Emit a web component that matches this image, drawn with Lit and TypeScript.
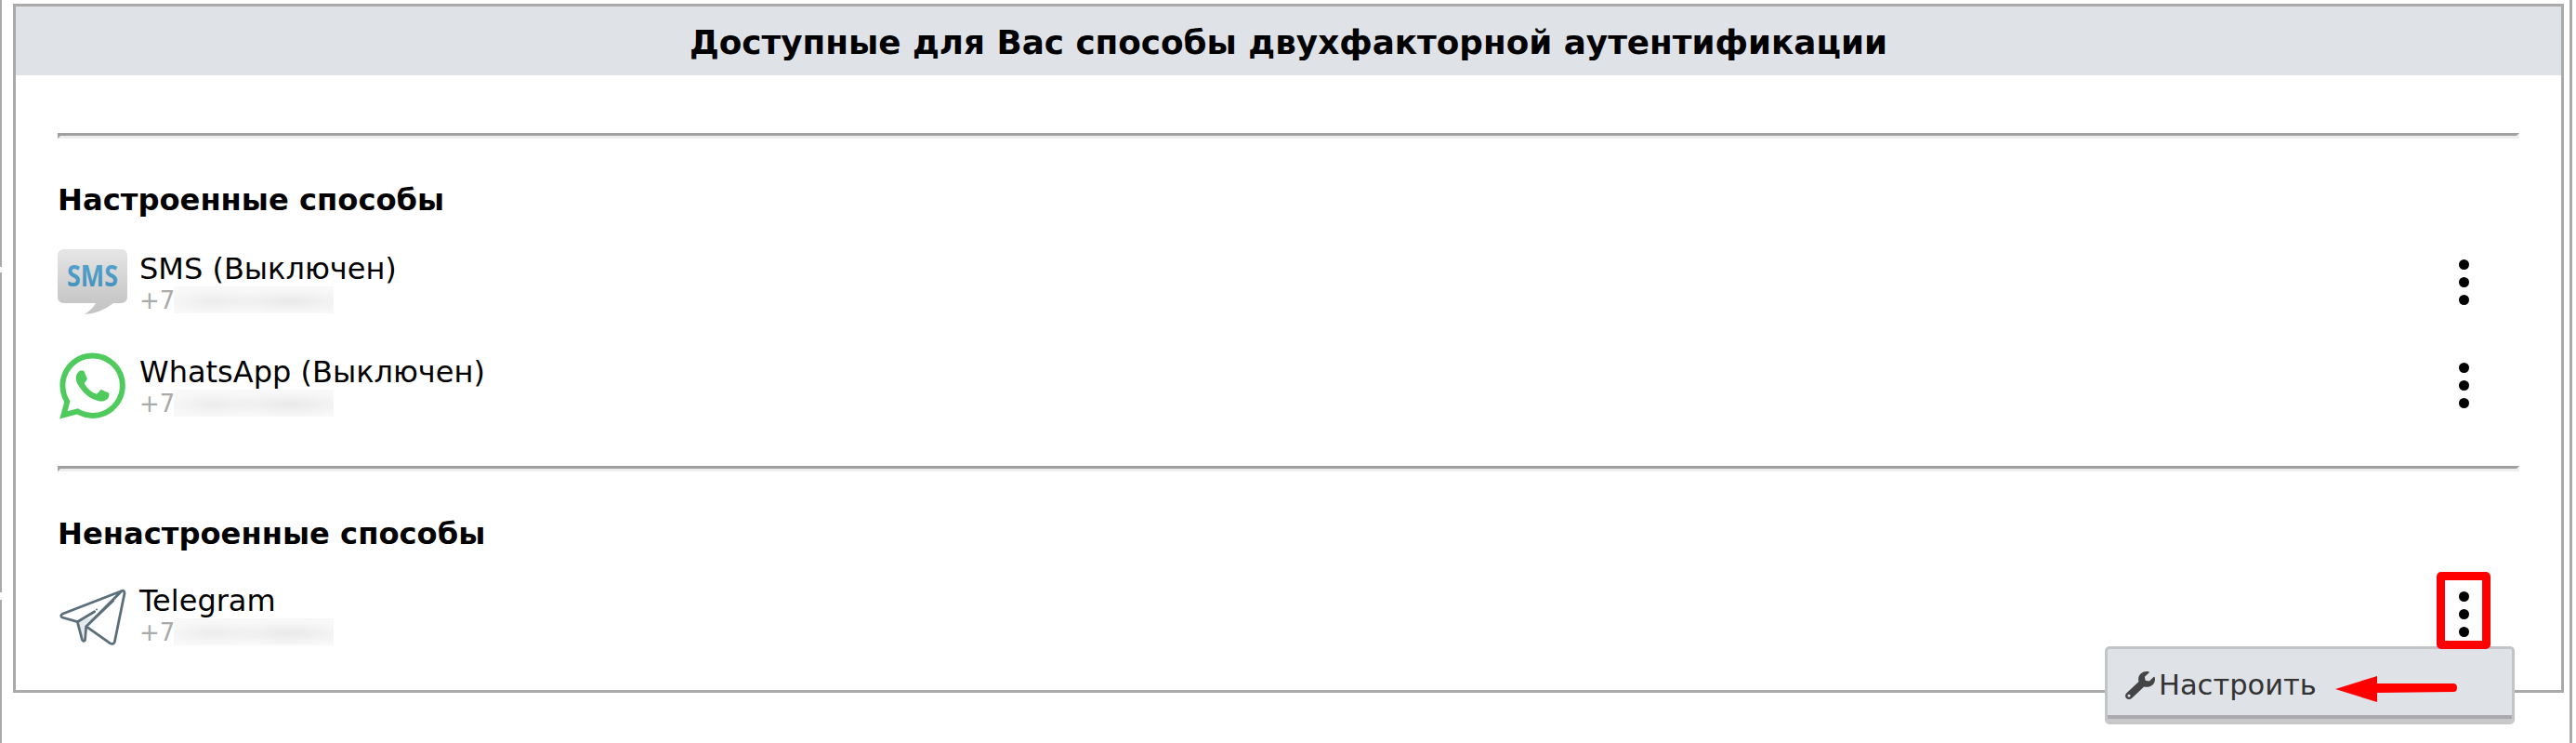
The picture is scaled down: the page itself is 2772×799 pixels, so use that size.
import { LitElement, html, css } from "lit";
import { customElement } from "lit/decorators.js";

const smsIcon = html`<svg class="icon" viewBox="62 268 75 72" width="75" height="72">
  <defs>
    <linearGradient id="g1" x1="0" y1="0" x2="0" y2="1"><stop offset="0" stop-color="#e6e6e6"/><stop offset="0.75" stop-color="#c9c9c9"/><stop offset="1" stop-color="#c4c4c4"/></linearGradient>
    <linearGradient id="g2" x1="0" y1="0" x2="0" y2="1"><stop offset="0" stop-color="#5aa7cf"/><stop offset="1" stop-color="#3f8fbb"/></linearGradient>
  </defs>
  <path fill="url(#g1)" d="M69 268H130Q137 268 137 275V319Q137 326 130 326H122Q108 337 91 338Q100 332 103 326H69Q62 326 62 319V275Q62 268 69 268Z"/>
  <text x="99.5" y="308" text-anchor="middle" textLength="55" lengthAdjust="spacingAndGlyphs" font-family="'Open Sans',sans-serif" font-weight="700" font-size="32" fill="url(#g2)">SMS</text>
</svg>`;

const waIcon = html`<svg class="icon wa" viewBox="0 0 24 24" width="71" height="72"><path fill="#4fcb5e" d="M17.472 14.382c-.297-.149-1.758-.867-2.03-.967-.273-.099-.471-.148-.67.15-.197.297-.767.966-.94 1.164-.173.199-.347.223-.644.075-.297-.15-1.255-.463-2.39-1.475-.883-.788-1.48-1.761-1.653-2.059-.173-.297-.018-.458.13-.606.134-.133.298-.347.446-.52.149-.174.198-.298.298-.497.099-.198.05-.371-.025-.52-.075-.149-.669-1.612-.916-2.207-.242-.579-.487-.5-.669-.51-.173-.008-.371-.01-.57-.01-.198 0-.52.074-.792.372-.272.297-1.04 1.016-1.04 2.479 0 1.462 1.065 2.875 1.213 3.074.149.198 2.096 3.2 5.077 4.487.709.306 1.262.489 1.694.625.712.227 1.36.195 1.871.118.571-.085 1.758-.719 2.006-1.413.248-.694.248-1.289.173-1.413-.074-.124-.272-.198-.57-.347m-5.421 7.403h-.004a9.87 9.87 0 01-5.031-1.378l-.361-.214-3.741.982.998-3.648-.235-.374a9.86 9.86 0 01-1.51-5.26c.001-5.45 4.436-9.884 9.888-9.884 2.64 0 5.122 1.03 6.988 2.898a9.825 9.825 0 012.893 6.994c-.003 5.45-4.437 9.884-9.885 9.884m8.413-18.297A11.815 11.815 0 0012.05 0C5.495 0 .16 5.335.157 11.892c0 2.096.547 4.142 1.588 5.945L.057 24l6.305-1.654a11.882 11.882 0 005.683 1.448h.005c6.554 0 11.89-5.335 11.893-11.893a11.821 11.821 0 00-3.48-8.413z"/></svg>`;

const tgIcon = html`<svg class="icon" viewBox="62 627 75 66" width="75" height="66">
  <path fill="#e3e9ec" d="M83.3 667.7L88.3 686.7L92.7 672.7L101 662Z"/>
  <path fill="none" stroke="#5b6f7b" stroke-width="2.8" stroke-linejoin="round" stroke-linecap="round" d="M131 634.5L67 659.3Q64.5 661.5 67 663L83.3 667.7L88.3 686.7Q90 689.5 91.5 687.5L92.7 672.7L121.7 645M92.7 672.7L118.3 690.7Q122 692.5 123.3 689.5L134 637Q134 633.5 131 634.5ZM83.3 667.7L101.7 656.7"/>
  <circle cx="104" cy="654.5" r="1" fill="#5b6f7b"/>
</svg>`;

const wrench = html`<svg class="wrench" viewBox="0 0 512 512" width="32" height="30" preserveAspectRatio="none"><path fill="#444" d="M507.73 109.1c-2.24-9.03-13.54-12.09-20.12-5.51l-74.36 74.36-67.88-11.31-11.31-67.88 74.36-74.36c6.62-6.62 3.43-17.9-5.66-20.16-47.38-11.74-99.55.91-136.58 37.93-39.64 39.64-50.55 97.1-34.05 147.2L18.74 402.76c-24.99 24.99-24.99 65.51 0 90.5 24.99 24.99 65.51 24.99 90.5 0l213.21-213.21c50.12 16.71 107.47 5.68 147.37-34.22 37.07-37.07 49.7-89.32 37.91-136.73zM64 472c-13.25 0-24-10.75-24-24 0-13.26 10.75-24 24-24s24 10.74 24 24c0 13.25-10.75 24-24 24z"/></svg>`;

const rows1 = [
  { icon: smsIcon, name: "SMS (Выключен)" },
  { icon: waIcon, name: "WhatsApp (Выключен)" },
];

@customElement("app-root")
export class AppRoot extends LitElement {
  static styles = css`
    :host { display: block; font-family: "DejaVu Sans", Verdana, sans-serif; color: #000; background: #fff; height: 799px; overflow: hidden; }
    .frame { position: relative; box-sizing: border-box; width: 2768px; height: 799px; border-left: 2px solid #aaa; border-right: 3px solid #aaa; padding: 4px 6px 0 12px; }
    .gap { position: absolute; left: -2px; width: 2px; background: #fff; }
    .gap.a { top: 287px; height: 6px; }
    .gap.b { top: 637px; height: 8px; }
    .card { box-sizing: border-box; height: 741px; border: 3px solid #aaa; }
    .head { height: 74px; box-sizing: border-box; background: #dfe2e7; display: flex; align-items: center; justify-content: center; font-weight: 700; font-size: 35.75px; padding-top: 2px; }
    .body { padding: 62px 45px 0 45px; }
    .rule { height: 0; border-style: solid; border-width: 3px; border-color: #a0a0a0 #eeeeee #eeeeee #a0a0a0; }
    h2 { margin: 49px 0 0; font-size: 32.2px; font-weight: 700; line-height: 34px; }
    .rule.s2 { margin-top: 49px; }
    .rule.s2 + h2 { margin-top: 50px; }
    .row { display: flex; align-items: center; height: 75px; }
    .rows { display: flex; flex-direction: column; gap: 36px; margin-top: 34px; }
    .rows.two { margin-top: 32px; }
    .iconbox { width: 88px; flex: none; display: flex; align-items: center; }
    .icon.wa { margin-left: 2px; }
    .text { flex: 1; display: flex; flex-direction: column; }
    .name { font-size: 32px; line-height: 38px; }
    .phone { display: flex; align-items: center; font-size: 26px; line-height: 30px; color: #aaa; }
    .blur { width: 172px; height: 29px; margin-left: -1px; background: radial-gradient(ellipse 40% 45% at 72% 55%, #e9e9e9, transparent), radial-gradient(ellipse 30% 45% at 25% 55%, #ececec, transparent), #f8f8f8; }
    .dots { width: 40px; margin-right: 40px; display: flex; flex-direction: column; align-items: center; gap: 8px; }
    .dots i { width: 11px; height: 11px; border-radius: 50%; background: #000; }
    .menu { position: absolute; left: 2263px; top: 695px; width: 441px; height: 84px; box-sizing: border-box; background: #dfe2e7; border: 3px solid #c2c4c7; border-bottom: 6px solid #c8c8c8; border-radius: 5px; display: flex; align-items: center; padding: 2px 0 0 19px; color: #333; font-size: 30.5px; box-shadow: inset 0 -4px 0 #a9a9ae; }
    .wrench { flex: none; margin-right: 4px; filter: blur(.6px); }
    .mark { position: absolute; left: 2620px; top: 615px; width: 58px; height: 83px; box-sizing: border-box; border: 9px solid #ff0000; border-radius: 5px; }
    .arrow { position: absolute; left: 2509px; top: 727px; }
  `;

  private item(icon: unknown, name: string) {
    return html`<div class="row">
      <div class="iconbox">${icon}</div>
      <div class="text">
        <div class="name">${name}</div>
        <div class="phone"><span>+7</span><div class="blur"></div></div>
      </div>
      <div class="dots"><i></i><i></i><i></i></div>
    </div>`;
  }

  render() {
    return html`<div class="frame">
      <div class="gap a"></div><div class="gap b"></div>
      <div class="card">
        <div class="head">Доступные для Вас способы двухфакторной аутентификации</div>
        <div class="body">
          <div class="rule"></div>
          <h2>Настроенные способы</h2>
          <div class="rows">${rows1.map((r) => this.item(r.icon, r.name))}</div>
          <div class="rule s2"></div>
          <h2>Ненастроенные способы</h2>
          <div class="rows two">${this.item(tgIcon, "Telegram")}</div>
        </div>
      </div>
      <div class="menu">${wrench}<span>Настроить</span></div>
      <div class="mark"></div>
      <svg class="arrow" width="135" height="28" viewBox="0 0 135 28"><path fill="#ff0000" d="M2 14L47 0V8L129 8Q133 8 133 12.5Q133 17 129 17L47 18V28Z"/></svg>
    </div>`;
  }
}
